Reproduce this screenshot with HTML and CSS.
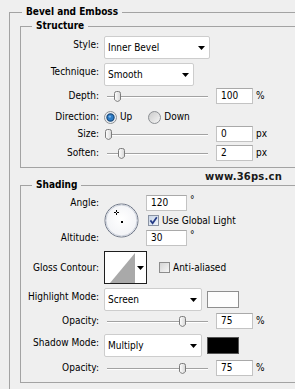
FILE: index.html
```html
<!DOCTYPE html>
<html>
<head>
<meta charset="utf-8">
<title>Bevel and Emboss</title>
<link rel="stylesheet" href="styles.css">
</head>
<body>
<fieldset class="group outer">
  <legend>Bevel and Emboss</legend>

  <fieldset class="group inner structure">
    <legend>Structure</legend>

    <div class="row sel-row r-style">
      <span class="lbl">Style:</span>
      <div class="select w-style"><span>Inner Bevel</span><svg class="arrow" width="7" height="4" viewBox="0 0 7 4"><polygon points="0,0 7,0 3.5,4" fill="#000"/></svg></div>
    </div>

    <div class="row sel-row r-tech">
      <span class="lbl">Technique:</span>
      <div class="select w-tech"><span>Smooth</span><svg class="arrow" width="7" height="4" viewBox="0 0 7 4"><polygon points="0,0 7,0 3.5,4" fill="#000"/></svg></div>
    </div>

    <div class="row num-row r-depth">
      <span class="lbl">Depth:</span>
      <div class="slider"><svg class="thumb" style="left:10px" width="7" height="11" viewBox="0 0 7 11"><use href="#thumb"/></svg></div>
      <div class="field">100</div><span class="unit">%</span>
    </div>

    <div class="row r-dir">
      <span class="lbl">Direction:</span>
      <svg class="radio" width="13" height="13" viewBox="0 0 13 13"><circle cx="6.5" cy="6.5" r="6" fill="#eef0f2" stroke="#8c8f93"/><circle cx="6.5" cy="6.5" r="3.6" fill="#2d7cc6" stroke="#17497c" stroke-width="1.2"/><circle cx="5.8" cy="5.6" r="1.2" fill="#7fb8ea"/></svg>
      <span class="rlabel">Up</span>
      <svg class="radio r-down" width="13" height="13" viewBox="0 0 13 13"><defs><linearGradient id="rg" x1="0" y1="0" x2="1" y2="1"><stop offset="0" stop-color="#c9c9c9"/><stop offset="1" stop-color="#f7f7f7"/></linearGradient></defs><circle cx="6.5" cy="6.5" r="6" fill="url(#rg)" stroke="#8c8f93"/></svg>
      <span class="rlabel">Down</span>
    </div>

    <div class="row num-row r-size">
      <span class="lbl">Size:</span>
      <div class="slider"><svg class="thumb" style="left:1px" width="7" height="11" viewBox="0 0 7 11"><use href="#thumb"/></svg></div>
      <div class="field">0</div><span class="unit">px</span>
    </div>

    <div class="row num-row r-soft">
      <span class="lbl">Soften:</span>
      <div class="slider"><svg class="thumb" style="left:14px" width="7" height="11" viewBox="0 0 7 11"><use href="#thumb"/></svg></div>
      <div class="field">2</div><span class="unit">px</span>
    </div>
  </fieldset>

  <fieldset class="group inner shading">
    <legend>Shading</legend>

    <div class="angle-grid">
      <span class="lbl a-angle">Angle:</span>
      <svg class="dial" width="35" height="35" viewBox="0 0 35 35">
        <defs><radialGradient id="dg" cx="50%" cy="45%" r="60%"><stop offset="0" stop-color="#ffffff"/><stop offset="0.8" stop-color="#f3f4f7"/><stop offset="1" stop-color="#dfe2e9"/></radialGradient></defs>
        <circle cx="17.5" cy="17.5" r="16.5" fill="url(#dg)" stroke="#6d7585"/>
        <circle cx="17.5" cy="17.5" r="15.5" fill="none" stroke="#cdd2dc"/>
        <rect x="17" y="18" width="2" height="2" fill="#000"/>
        <rect x="10" y="9" width="2" height="1" fill="#000"/>
        <rect x="13" y="9" width="2" height="1" fill="#000"/>
        <rect x="12" y="7" width="1" height="2" fill="#000"/>
        <rect x="12" y="10" width="1" height="2" fill="#000"/>
      </svg>
      <div class="a-f1 deg-row"><div class="field w-ang">120</div><span class="deg">°</span></div>
      <div class="a-cb check-row">
        <svg class="cb" width="11" height="11" viewBox="0 0 11 11"><defs><linearGradient id="cbg" x1="0" y1="0" x2="1" y2="1"><stop offset="0" stop-color="#c6d3e6"/><stop offset="1" stop-color="#f4f7fb"/></linearGradient></defs><rect x="0.5" y="0.5" width="10" height="10" fill="url(#cbg)" stroke="#8a93a3"/><path d="M2.4 5.4 L4.6 8.2 L8.8 2.2" fill="none" stroke="#253b86" stroke-width="1.7"/></svg>
        <span class="cb-text">Use Global Light</span>
      </div>
      <span class="lbl a-alt">Altitude:</span>
      <div class="a-f2 deg-row"><div class="field w-ang">30</div><span class="deg">°</span></div>
    </div>

    <div class="row r-gloss">
      <span class="lbl">Gloss Contour:</span>
      <div class="contour">
        <svg class="cprev" width="30" height="31" viewBox="0 0 30 31"><rect width="30" height="31" fill="#fff"/><polygon points="5,31 30,1 30,31" fill="#a9a9a9"/></svg>
        <svg class="carrow" width="7" height="4" viewBox="0 0 7 4"><polygon points="0,0 7,0 3.5,4" fill="#000"/></svg>
      </div>
      <svg class="cb cb-aa" width="11" height="11" viewBox="0 0 11 11"><defs><linearGradient id="cbo" x1="0" y1="0" x2="1" y2="1"><stop offset="0" stop-color="#d2d2d2"/><stop offset="1" stop-color="#f8f8f8"/></linearGradient></defs><rect x="0.5" y="0.5" width="10" height="10" fill="url(#cbo)" stroke="#8c8c8c"/></svg>
      <span class="cb-text">Anti-aliased</span>
    </div>

    <div class="row sel-row r-hmode">
      <span class="lbl">Highlight Mode:</span>
      <div class="select w-mode"><span>Screen</span><svg class="arrow" width="7" height="4" viewBox="0 0 7 4"><polygon points="0,0 7,0 3.5,4" fill="#000"/></svg></div>
      <div class="swatch sw-white"></div>
    </div>

    <div class="row num-row r-op1">
      <span class="lbl">Opacity:</span>
      <div class="slider"><svg class="thumb" style="left:75px" width="7" height="11" viewBox="0 0 7 11"><use href="#thumb"/></svg></div>
      <div class="field">75</div><span class="unit">%</span>
    </div>

    <div class="row sel-row r-smode">
      <span class="lbl">Shadow Mode:</span>
      <div class="select w-mode"><span>Multiply</span><svg class="arrow" width="7" height="4" viewBox="0 0 7 4"><polygon points="0,0 7,0 3.5,4" fill="#000"/></svg></div>
      <div class="swatch sw-black"></div>
    </div>

    <div class="row num-row r-op2">
      <span class="lbl">Opacity:</span>
      <div class="slider"><svg class="thumb" style="left:75px" width="7" height="11" viewBox="0 0 7 11"><use href="#thumb"/></svg></div>
      <div class="field">75</div><span class="unit">%</span>
    </div>
  </fieldset>
</fieldset>

<div class="watermark">www.36ps.cn</div>

<svg class="defs" width="0" height="0">
  <defs>
    <linearGradient id="tg" x1="0" y1="0" x2="1" y2="0"><stop offset="0" stop-color="#ffffff"/><stop offset="1" stop-color="#d6d6d6"/></linearGradient>
    <g id="thumb"><path d="M0.5 2.5 Q0.5 0.5 2.5 0.5 H4.5 Q6.5 0.5 6.5 2.5 V8 Q6.5 9 5.5 9.6 L3.5 10.5 L1.5 9.6 Q0.5 9 0.5 8 Z" fill="url(#tg)" stroke="#7c7c7c"/></g>
  </defs>
</svg>
</body>
</html>
```

FILE: styles.css
```css
* { box-sizing: border-box; }
html, body { margin: 0; padding: 0; }
body {
  width: 295px;
  height: 389px;
  overflow: hidden;
  position: relative;
  background: #efefef;
  font-family: "DejaVu Sans Condensed", "DejaVu Sans", sans-serif;
  font-stretch: condensed;
  font-size: 10px;
  line-height: 12px;
  color: #000;
}

.group {
  border: 1px solid #a3a3a3;
  border-right: 0;
  margin: 0;
  padding: 0;
  min-width: 0;
}
.group > legend {
  font-weight: bold;
  line-height: 14px;
  padding: 0 4px;
}
.outer {
  margin: 5px 0 0 9px;
  width: 286px;
  height: 384px;
  border-bottom: 0;
}
.outer > legend { margin-left: 12px; }
.inner { margin-left: 10px; width: 275px; }
.inner > legend { margin-left: 11px; }
.structure { padding: 3px 0 6px; }
.shading { margin-top: 10px; padding: 3px 0 6px; }

.row { display: flex; align-items: center; }
.lbl {
  flex: none;
  width: 83px;
  padding-right: 5px;
  text-align: right;
  white-space: nowrap;
}
.sel-row { height: 23px; }
.sel-row > .lbl { margin-bottom: 5px; }
.num-row { height: 16px; }

.r-tech { margin-top: 4px; }
.r-depth { margin-top: 2px; }
.r-dir { margin-top: 7px; height: 12px; }
.r-size { margin-top: 3px; }
.r-soft { margin-top: 3px; }

.select {
  display: flex;
  align-items: center;
  justify-content: space-between;
  height: 23px;
  background: #fff;
  border: 1px solid #cdcdcd;
  border-radius: 2px;
  padding: 0 4px 0 3px;
  flex: none;
}
.select span { padding-top: 1px; }
.w-style { width: 106px; }
.w-tech { width: 90px; }
.w-mode { width: 98px; }
.arrow { display: block; }

.slider {
  position: relative;
  flex: none;
  width: 106px;
  height: 11px;
}
.slider::before {
  content: "";
  position: absolute;
  left: 3px;
  width: 101px;
  top: 5px;
  height: 1px;
  background: #a2a2a2;
  box-shadow: 0 1px 0 #ffffff;
}
.thumb { position: absolute; top: 0; display: block; }

.field {
  flex: none;
  width: 37px;
  height: 16px;
  margin-left: 6px;
  background: #fff;
  border: 1px solid #c3c3c3;
  border-top-color: #a9a9a9;
  padding-left: 4px;
  line-height: 14px;
}
.unit { margin-left: 3px; }

.radio { display: block; flex: none; }
.rlabel { margin-left: 2px; }
.r-down { margin-left: 16px; }
.r-dir .radio + .rlabel { margin-left: 3px; }

.angle-grid {
  display: grid;
  grid-template-columns: 83px 42px auto;
  grid-template-rows: 16px 19px 16px;
  align-items: center;
}
.a-angle { grid-column: 1; grid-row: 1; }
.a-alt { grid-column: 1; grid-row: 3; }
.dial { grid-column: 2; grid-row: 1 / 4; display: block; }
.a-f1 { grid-column: 3; grid-row: 1; }
.a-cb { grid-column: 3; grid-row: 2; }
.a-f2 { grid-column: 3; grid-row: 3; }
.deg-row { display: flex; align-items: center; height: 16px; }
.deg-row .field { margin-left: 0; }
.w-ang { width: 41px; }
.deg { margin-left: 3px; align-self: flex-start; margin-top: -1px; }
.check-row { display: flex; align-items: center; }
.cb { display: block; flex: none; margin-left: 2px; }
.cb-text { margin-left: 3px; white-space: nowrap; }

.r-gloss { margin-top: 5px; height: 33px; }
.contour {
  flex: none;
  width: 43px;
  height: 33px;
  border: 1px solid #1e1e1e;
  background: #fff;
  display: flex;
  align-items: center;
}
.cprev { display: block; align-self: stretch; }
.carrow { display: block; margin-left: 2px; }
.cb-aa { margin-left: 12px; }

.r-hmode { margin-top: 4px; }
.r-op1 { margin-top: 2px; }
.r-smode { margin-top: 5px; }
.r-op2 { margin-top: 3px; }

.swatch {
  flex: none;
  width: 32px;
  height: 17px;
  margin-left: 5px;
  border: 1px solid #8e8e8e;
}
.sw-white { background: #fdfdfd; }
.sw-black { background: #000; border-color: #555; }

.watermark {
  position: absolute;
  left: 205px;
  top: 171px;
  font-family: "DejaVu Sans", sans-serif;
  font-stretch: normal;
  font-size: 10px;
  line-height: 12px;
  letter-spacing: 0.2px;
  color: #1a1a1a;
  font-weight: bold;
}
.defs { position: absolute; width: 0; height: 0; overflow: hidden; }
```
